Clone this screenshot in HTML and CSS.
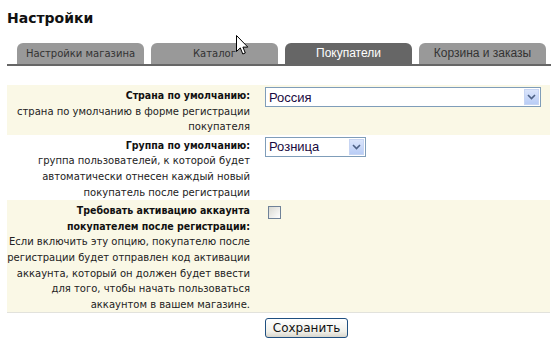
FILE: index.html
```html
<!DOCTYPE html>
<html>
<head>
<meta charset="utf-8">
<link rel="stylesheet" href="styles.css">
</head>
<body>
<h1 class="page-title">Настройки</h1>

<ul class="tabs">
   <li class="tab"><a href="#">Настройки магазина</a></li>
   <li class="tab"><a href="#">Каталог</a></li>
   <li class="tab tab-active alt-font"><a href="#">Покупатели</a></li>
   <li class="tab alt-font"><a href="#">Корзина и заказы</a></li>
</ul>

<form class="settings">
<table class="settings-table">
   <tr class="row-odd">
      <td class="label">
         <b>Страна по умолчанию:</b><br>
         страна по умолчанию в форме регистрации покупателя
      </td>
      <td class="control">
         <span class="select select-wide">
            <select><option>Россия</option></select>
            <span class="select-btn"><svg width="9" height="6" viewBox="0 0 9 6"><path d="M1 1 L4.5 4.5 L8 1" fill="none" stroke="#4d6185" stroke-width="1.6"/></svg></span>
         </span>
      </td>
   </tr>
   <tr>
      <td class="label">
         <b>Группа по умолчанию:</b><br>
         группа пользователей, к которой будет автоматически отнесен каждый новый покупатель после регистрации
      </td>
      <td class="control">
         <span class="select select-narrow">
            <select><option>Розница</option></select>
            <span class="select-btn"><svg width="9" height="6" viewBox="0 0 9 6"><path d="M1 1 L4.5 4.5 L8 1" fill="none" stroke="#4d6185" stroke-width="1.6"/></svg></span>
         </span>
      </td>
   </tr>
   <tr class="row-odd row-last">
      <td class="label">
         <b>Требовать активацию аккаунта покупателем после регистрации:</b><br>
         Если включить эту опцию, покупателю после регистрации будет отправлен код активации аккаунта, который он должен будет ввести для того, чтобы начать пользоваться аккаунтом в вашем магазине.
      </td>
      <td class="control">
         <input type="checkbox" class="check">
      </td>
   </tr>
</table>
<div class="actions">
   <button type="submit" class="btn">Сохранить</button>
</div>
</form>

<svg class="cursor" width="13" height="21" viewBox="0 0 13 21">
   <path d="M0.5 0.5 L0.5 16.5 L4.3 12.9 L6.8 19 L9.3 18 L6.9 12.1 L11.8 12.1 Z" fill="#fff" stroke="#000" stroke-width="1"/>
</svg>
</body>
</html>
```

FILE: styles.css
```css
body{
   margin: 0;
   padding: 0 7px;
   font-family: "DejaVu Sans", Verdana, sans-serif;
   font-size: 10px;
   color: #222;
   background: #fff;
}
.page-title{
   margin: 10px 0 0 0;
   font-size: 14px;
   line-height: 16px;
   font-weight: bold;
   color: #111;
}

.tabs{
   list-style: none;
   margin: 17px 0 0 0;
   padding: 0 0 0 10px;
   display: flex;
   gap: 7px;
   border-bottom: 2px solid #666;
}
.tab{
   width: 127px;
   height: 21px;
   background: #999;
   border-radius: 6px 6px 0 0;
   text-align: center;
}
.tab a{
   display: block;
   line-height: 21px;
   font-size: 10px;
   color: #333;
   text-decoration: none;
}
.alt-font a{
   font-family: "Liberation Sans", Arial, sans-serif;
   font-size: 12px;
}
.tab-active{
   background: #666;
}
.tab-active a{
   color: #fff;
}

.settings-table{
   margin-top: 19px;
   width: 543px;
   border-collapse: collapse;
   font-size: 10px;
}
.settings-table td{
   vertical-align: top;
   line-height: 15.6px;
}
.row-odd td{
   background: #faf8e6;
}
.row-last td{
   border-bottom: 1px solid #e2e2dc;
}
.label{
   width: 243px;
   padding: 3px 8px 0 0;
   text-align: right;
}
.label b{
   font-family: "DejaVu Sans Condensed", "DejaVu Sans", sans-serif;
   font-size: 10.5px;
   color: #111;
}
.control{
   padding: 2px 9px 0 7px;
}

.select{
   display: inline-flex;
   height: 20px;
   box-sizing: border-box;
   border: 1px solid #7f9db9;
   background: #fff;
}
.select select{
   flex: 1;
   appearance: none;
   -webkit-appearance: none;
   border: 0;
   outline: 0;
   background: transparent;
   padding: 0 3px;
   font-family: "Liberation Sans", Arial, sans-serif;
   font-size: 13px;
   color: #1a0a40;
}
.select-btn{
   width: 15px;
   margin: 1px;
   display: flex;
   align-items: center;
   justify-content: center;
   background: linear-gradient(#dbe5fb, #b9cdf6);
   border: 1px solid #c7d5f3;
   box-sizing: border-box;
}
.select-wide{
   width: 276px;
}
.select-narrow{
   width: 101px;
}

.check{
   appearance: none;
   -webkit-appearance: none;
   width: 13px;
   height: 13px;
   margin: 4px 0 0 3px;
   border: 1px solid #6f8298;
   background: linear-gradient(135deg, #d9d9d2, #fff);
   box-sizing: border-box;
}

.actions{
   padding: 5px 0 0 258px;
}
.btn{
   width: 83px;
   height: 20px;
   padding: 0;
   font-family: "DejaVu Sans", Tahoma, sans-serif;
   font-size: 12px;
   color: #111;
   border: 1px solid #1f4f80;
   border-radius: 3px;
   background: linear-gradient(#fff, #f0f0ea 70%, #d8d5cb);
}

.cursor{
   position: absolute;
   left: 236px;
   top: 35px;
}
```
